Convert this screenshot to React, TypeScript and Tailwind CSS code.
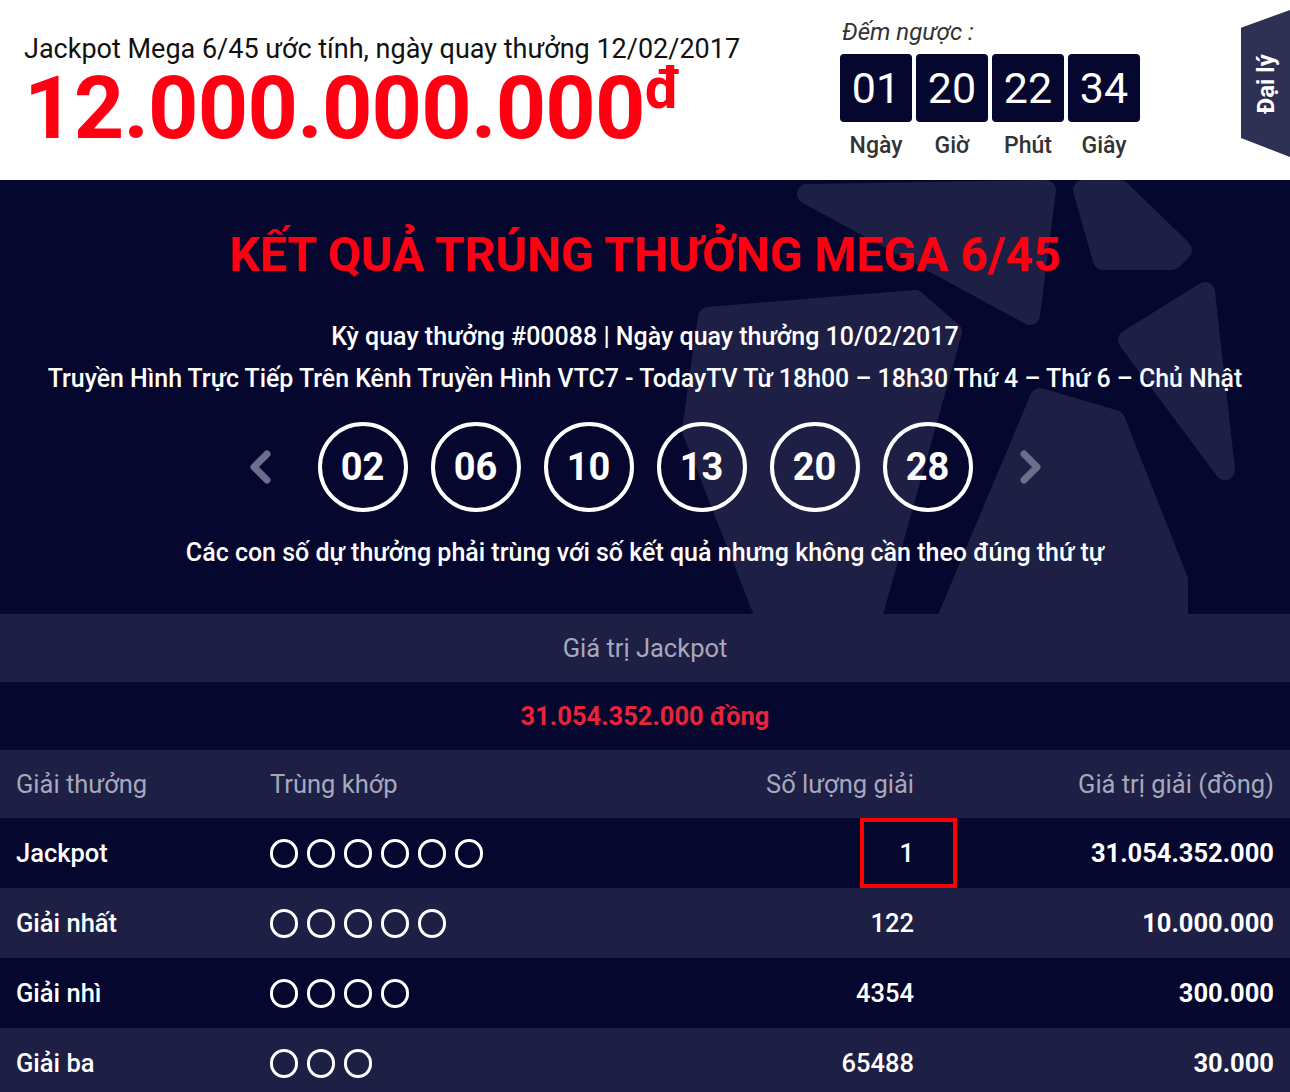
import React from "react";

function Pinwheel() {
  const fill = "#1e1f45";
  const blades = [
    "807,14 1046,10 1030,135",
    "1083,10 1120,10 1182,70 1172,80 1103,80",
    "1128,160 1205,112 1225,290",
    "1040,218 1115,240 1178,400 1178,444 945,444",
    "708,137 915,120 952,152 870,444 768,444 692,250",
  ];
  return (
    <svg
      className="pointer-events-none absolute inset-0"
      width="1290"
      height="434"
      viewBox="0 0 1290 434"
    >
      {blades.map((p, i) => (
        <polygon
          key={i}
          points={p}
          fill={fill}
          stroke={fill}
          strokeWidth="20"
          strokeLinejoin="round"
        />
      ))}
    </svg>
  );
}

function Chevron({ dir }: { dir: "left" | "right" }) {
  return (
    <svg width="24" height="34" viewBox="0 0 24 34">
      <polyline
        points={dir === "left" ? "19,4 6,17 19,30" : "5,4 18,17 5,30"}
        fill="none"
        stroke="#6c6e8c"
        strokeWidth="7"
        strokeLinecap="round"
        strokeLinejoin="round"
      />
    </svg>
  );
}

function Rings({ n }: { n: number }) {
  return (
    <div className="flex items-center gap-[9px]">
      {Array.from({ length: n }).map((_, i) => (
        <span
          key={i}
          className="block h-[29px] w-[28px] rounded-full border-[3px] border-white"
        />
      ))}
    </div>
  );
}

export default function App() {
  const balls = ["02", "06", "10", "13", "20", "28"];
  const rows = [
    { name: "Jackpot", n: 6, qty: "1", val: "31.054.352.000", dark: true, box: true },
    { name: "Giải nhất", n: 5, qty: "122", val: "10.000.000", dark: false },
    { name: "Giải nhì", n: 4, qty: "4354", val: "300.000", dark: true },
    { name: "Giải ba", n: 3, qty: "65488", val: "30.000", dark: false },
  ];
  const units = [
    ["01", "Ngày"],
    ["20", "Giờ"],
    ["22", "Phút"],
    ["34", "Giây"],
  ];

  return (
    <div className="w-[1290px] overflow-hidden bg-[#05072f] font-['Roboto',sans-serif]">
      {/* Header */}
      <div className="flex h-[180px] bg-white">
        <div className="flex-1 pl-6 pt-[33px]">
          <div className="text-[27px] leading-[32px] text-[#111]">
            Jackpot Mega 6/45 ước tính, ngày quay thưởng 12/02/2017
          </div>
          <div className="mt-[7px] flex items-start text-[#ff0012]">
            <span className="text-[88px] font-bold leading-[72px] tracking-[-0.8px]">
              12.000.000.000
            </span>
            <span className="-mt-[4px] text-[58px] font-bold leading-[40px]">
              đ
            </span>
          </div>
        </div>
        <div className="mr-[101px] w-[300px] pt-[16px]">
          <div className="pl-[2px] text-[24px] italic leading-[32px] text-[#333]">
            Đếm ngược :
          </div>
          <div className="mt-[6px] flex gap-[4px]">
            {units.map(([v, l]) => (
              <div key={l} className="flex w-[72px] flex-col items-center">
                <div className="flex h-[68px] w-[72px] items-center justify-center rounded-[4px] bg-[#05072f] text-[43px] leading-none text-white">
                  {v}
                </div>
                <div className="mt-[10px] text-[23px] font-medium leading-[28px] text-[#333]">
                  {l}
                </div>
              </div>
            ))}
          </div>
        </div>
        <div className="mt-[10px] flex h-[147px] w-[49px] items-center justify-center bg-[#2e3054] [clip-path:polygon(0_12%,100%_0,100%_100%,0_87%)]">
          <span className="-rotate-90 whitespace-nowrap text-[24px] font-bold text-white">
            Đại lý
          </span>
        </div>
      </div>

      {/* Hero */}
      <div className="relative h-[434px] overflow-hidden bg-[#05072f]">
        <Pinwheel />
        <div className="relative flex flex-col items-center pt-[45px] text-white">
          <div className="text-[48px] font-bold leading-[60px] text-[#ff0012]">
            KẾT QUẢ TRÚNG THƯỞNG MEGA 6/45
          </div>
          <div className="mt-[31px] text-[25px] font-medium leading-[42px]">
            Kỳ quay thưởng #00088 | Ngày quay thưởng 10/02/2017
          </div>
          <div className="text-[24.9px] font-medium leading-[42px]">
            Truyền Hình Trực Tiếp Trên Kênh Truyền Hình VTC7 - TodayTV Từ 18h00 – 18h30 Thứ 4 – Thứ 6 – Chủ Nhật
          </div>
          <div className="mt-[22px] flex items-center">
            <Chevron dir="left" />
            <div className="mx-[46px] flex gap-[23px]">
              {balls.map((b) => (
                <div
                  key={b}
                  className="flex h-[90px] w-[90px] items-center justify-center rounded-full border-[4px] border-white text-[38px] font-bold leading-none"
                >
                  {b}
                </div>
              ))}
            </div>
            <Chevron dir="right" />
          </div>
          <div className="mt-[20px] text-[25px] font-medium leading-[42px]">
            Các con số dự thưởng phải trùng với số kết quả nhưng không cần theo đúng thứ tự
          </div>
        </div>
      </div>

      {/* Table */}
      <div className="text-[25.5px]">
        <div className="flex h-[68px] items-center justify-center bg-[#1e1f45] text-[#a6a8bb]">
          Giá trị Jackpot
        </div>
        <div className="flex h-[68px] items-center justify-center bg-[#05072f] font-bold text-[#e8243a]">
          31.054.352.000 đồng
        </div>
        <div className="grid h-[68px] grid-cols-[254px_476px_200px_1fr] items-center bg-[#1e1f45] text-[#a6a8bb]">
          <div className="px-4">Giải thưởng</div>
          <div className="px-4">Trùng khớp</div>
          <div className="px-4 text-right">Số lượng giải</div>
          <div className="px-4 text-right">Giá trị giải (đồng)</div>
        </div>
        {rows.map((r) => (
          <div
            key={r.name}
            className={`grid h-[70px] grid-cols-[254px_476px_200px_1fr] items-center text-white ${
              r.dark ? "bg-[#05072f]" : "bg-[#1e1f45]"
            }`}
          >
            <div className="px-4 font-medium">{r.name}</div>
            <div className="px-4">
              <Rings n={r.n} />
            </div>
            <div className="relative flex h-full items-center justify-end px-4 font-medium">
              {r.box && (
                <span className="absolute right-[-27px] top-0 h-[70px] w-[97px] border-[4px] border-[#ff0000]" />
              )}
              <span className="relative">{r.qty}</span>
            </div>
            <div className="px-4 text-right font-bold">{r.val}</div>
          </div>
        ))}
      </div>
    </div>
  );
}
